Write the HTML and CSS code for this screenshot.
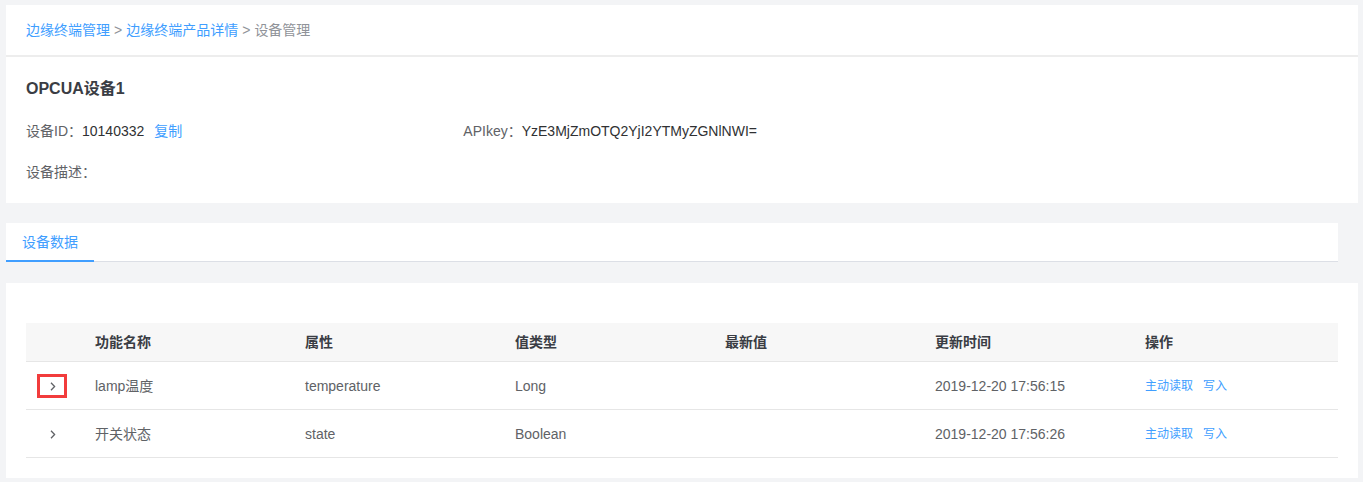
FILE: index.html
```html
<!DOCTYPE html>
<html lang="zh-CN">
<head>
<meta charset="utf-8">
<title>设备管理</title>
<link rel="stylesheet" href="styles.css">
</head>
<body>
<div class="page">
  <section class="card info-card">
    <div class="crumbs">
      <a class="crumb-link">边缘终端管理</a><span class="sep">&gt;</span><a class="crumb-link">边缘终端产品详情</a><span class="sep">&gt;</span><span class="crumb-cur">设备管理</span>
    </div>
    <div class="info-body">
      <h1 class="title">OPCUA设备1</h1>
      <div class="info-row">
        <div class="info-item">设备ID：<span class="val">10140332</span><a class="copy">复制</a></div>
        <div class="info-item">APIkey：<span class="val">YzE3MjZmOTQ2YjI2YTMyZGNlNWI=</span></div>
      </div>
      <div class="info-row">
        <div class="info-item">设备描述：</div>
      </div>
    </div>
  </section>

  <section class="tabs">
    <div class="tab active">设备数据</div>
  </section>

  <section class="card table-card">
    <div class="table">
      <div class="tr thead">
        <div class="td expand-col"></div>
        <div class="td">功能名称</div>
        <div class="td">属性</div>
        <div class="td">值类型</div>
        <div class="td">最新值</div>
        <div class="td">更新时间</div>
        <div class="td">操作</div>
      </div>
      <div class="tr">
        <div class="td expand-col"><span class="expand marked"><svg width="6" height="9" viewBox="0 0 6 9"><path d="M1 0.8 L4.6 4.5 L1 8.2" fill="none" stroke="#606266" stroke-width="1.3"/></svg></span></div>
        <div class="td">lamp温度</div>
        <div class="td">temperature</div>
        <div class="td">Long</div>
        <div class="td"></div>
        <div class="td">2019-12-20 17:56:15</div>
        <div class="td ops"><a>主动读取</a><a>写入</a></div>
      </div>
      <div class="tr">
        <div class="td expand-col"><span class="expand"><svg width="6" height="9" viewBox="0 0 6 9"><path d="M1 0.8 L4.6 4.5 L1 8.2" fill="none" stroke="#606266" stroke-width="1.3"/></svg></span></div>
        <div class="td">开关状态</div>
        <div class="td">state</div>
        <div class="td">Boolean</div>
        <div class="td"></div>
        <div class="td">2019-12-20 17:56:26</div>
        <div class="td ops"><a>主动读取</a><a>写入</a></div>
      </div>
    </div>
  </section>
</div>
</body>
</html>
```

FILE: styles.css
```css
* { box-sizing: border-box; }
html, body { margin: 0; padding: 0; }
body {
  background: #f3f4f6;
  font-family: "Liberation Sans", Arial, "Noto Sans CJK SC", sans-serif;
  font-size: 14px;
  color: #606266;
}
.page {
  padding: 5px 5px 0 6px;
}
.card { background: #fff; }

.info-card { height: 198px; }
.crumbs {
  height: 52px;
  line-height: 50px;
  padding: 0 20px;
  border-bottom: 2px solid #ededed;
  font-size: 14px;
}
.crumb-link { color: #409eff; }
.sep { color: #909399; margin: 0 4px; }
.crumb-cur { color: #909399; }

.info-body { padding: 20px 20px 0 20px; }
.title {
  margin: 0;
  font-size: 16px;
  font-weight: bold;
  line-height: 24px;
  color: #3a3d44;
}
.info-row {
  display: grid;
  grid-template-columns: 1fr 1fr 1fr;
  margin-top: 20px;
  line-height: 20px;
}
.info-row + .info-row { margin-top: 21px; }
.info-item { color: #606266; }
.val { color: #303133; }
.copy { color: #409eff; margin-left: 10px; }

.tabs {
  margin-top: 20px;
  width: 1332px;
  background: #fff;
  height: 39px;
  border-bottom: 1px solid #dcdfe6;
  display: flex;
}
.tab {
  position: relative;
  height: 38px;
  line-height: 38px;
  padding: 0 16px;
  color: #409eff;
  font-size: 14px;
}
.tab.active::after {
  content: "";
  position: absolute;
  left: 0;
  right: 0;
  bottom: -1px;
  height: 2px;
  background: #409eff;
}

.table-card {
  margin-top: 21px;
  padding: 40px 20px 20px 20px;
}
.tr {
  display: grid;
  grid-template-columns: 69px 210px 210px 210px 210px 210px 193px;
  height: 48px;
  border-bottom: 1px solid #e6e6e6;
  align-items: center;
}
.thead {
  height: 39px;
  background: #f7f7f7;
  font-weight: bold;
  color: #3a3d44;
}
.td {
  white-space: nowrap;
  line-height: 18px;
}
.expand-col {
  display: flex;
  align-items: center;
  padding-left: 11px;
}
.expand {
  width: 30px;
  height: 24px;
  display: flex;
  align-items: center;
  justify-content: center;
  border: 3px solid transparent;
}
.expand svg { display: block; margin: 2px 0 0 1px; }
.expand.marked { border-color: #f23c3c; }
.ops { font-size: 12px; }
.ops a { color: #409eff; margin-right: 10px; }
```
